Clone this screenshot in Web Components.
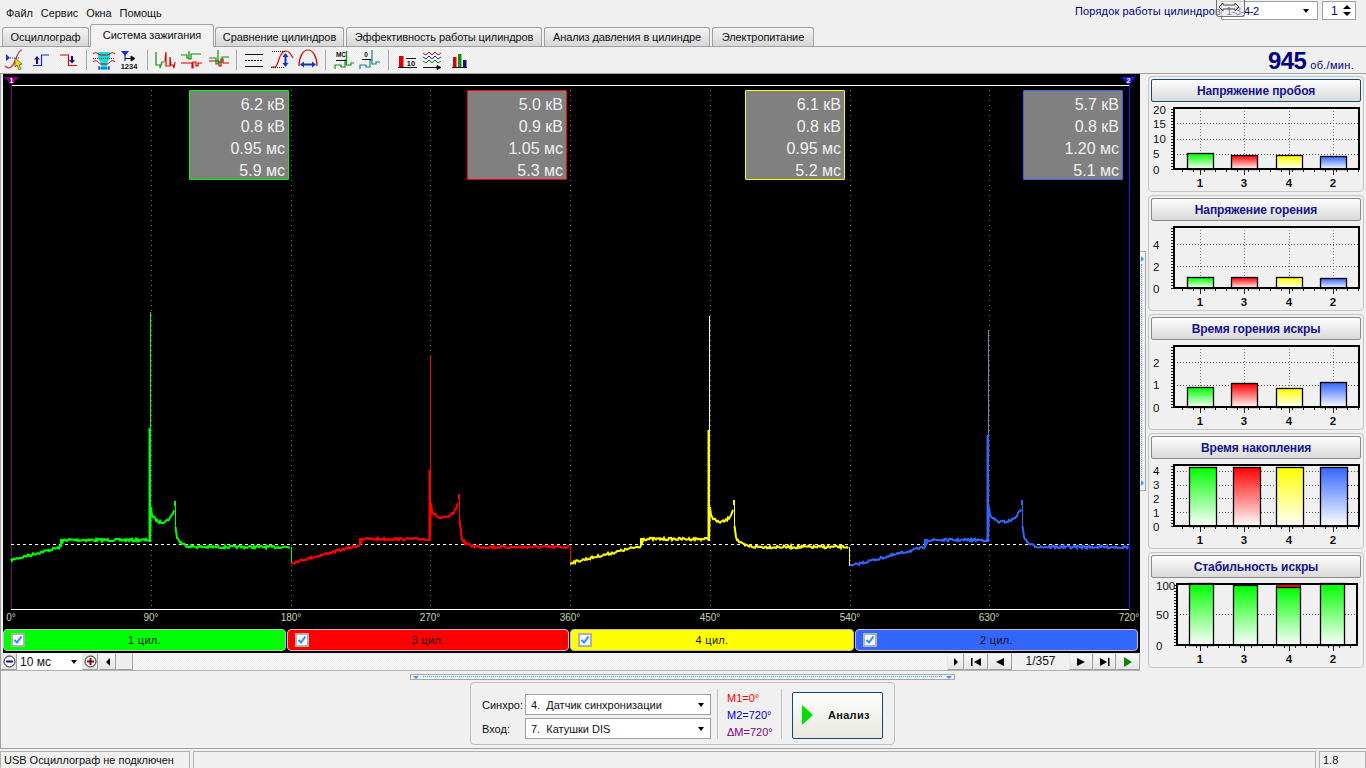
<!DOCTYPE html>
<html lang="ru">
<head>
<meta charset="utf-8">
<title>Система зажигания</title>
<style>
  html, body { margin: 0; padding: 0; }
  body { width: 1366px; height: 768px; overflow: hidden; background: #f0f0f0; font: 11px "Liberation Sans", Arial, sans-serif; color: #111; display: flex; flex-direction: column; }
</style>
</head>
<body>
<top-bar></top-bar>
<tab-strip></tab-strip>
<tool-bar>
  <tool-btn><svg viewBox="0 0 26 26"><path d="M1 19C5 23 9 20 11 14S15 3 18 3" fill="none" stroke="#e02020" stroke-width="1.2"/><path d="M2 7l4 4-4 3z" fill="#1030d0"/><path d="M6 11h9" stroke="#1030d0" stroke-dasharray="1 1"/><path d="M11 11l0 9 2-2 2 5 2-1-2-4 3-1z" fill="#f5d800" stroke="#333" stroke-width=".6"/></svg></tool-btn>
  <tool-btn><svg viewBox="0 0 26 26"><path d="M3 18.5h8.5V8H19" fill="none" stroke="#1030d0" stroke-width="1.2"/><path d="M7 9l3 3.5H8V17H6v-4.5H4z" fill="#101080"/></svg></tool-btn>
  <tool-btn active><svg viewBox="0 0 26 26"><path d="M4 8h8.5v10.5H21" fill="none" stroke="#e00000" stroke-width="1.2"/><path d="M16 16.5l-3-3.5h2V9h2v4h2z" fill="#101080"/></svg></tool-btn>
  <tool-sep w="8"></tool-sep>
  <tool-btn><svg viewBox="0 0 26 26"><path d="M8 5h12v5l-3 7v6h-6v-6l-3-7z" fill="#10e0e0"/><path d="M3 7c3-3 5 0 7 1h8c2-1 4-4 7-1M3 15c3-3 5 0 7 2h8c2-2 4-5 7-2" fill="none" stroke="#e00000"/><path d="M3 11.5h22" stroke="#111" stroke-dasharray="1 1"/><path d="M9 21h10M9 19v4M19 19v4" stroke="#1030d0" stroke-width="1.2"/></svg></tool-btn>
  <tool-btn><svg viewBox="0 0 26 26"><path d="M5 4h8l-4 5z" fill="#1030d0"/><path d="M9 8v6" stroke="#1030d0" stroke-width="1.2"/><path d="M9 11.5h9M15 9l4 2.500-4 2.500z" stroke="#111" fill="#111"/><text x="13" y="22" text-anchor="middle" font-family="Liberation Sans" font-size="7.5" font-weight="700" fill="#111">1234</text></svg></tool-btn>
  <tool-sep w="10"></tool-sep>
  <tool-btn active><svg viewBox="0 0 26 26"><path d="M4 5V18H8V21L10 15H13" fill="none" stroke="#109010" stroke-width="1.2"/><path d="M13 14L14 5V19H18V10L19 18H21L22 21L23 15" fill="none" stroke="#e00000" stroke-width="1.2"/></svg></tool-btn>
  <tool-btn><svg viewBox="0 0 26 26"><path d="M3 8H9V11H11V4V12H13V7H23" fill="none" stroke="#109010" stroke-width="1.2"/><path d="M3 16H14V21H15V15H18V19H20V16H24" fill="none" stroke="#e00000" stroke-width="1.2"/></svg></tool-btn>
  <tool-btn><svg viewBox="0 0 26 26"><path d="M5 14H15V19H17V12H19V16H25" fill="none" stroke="#e00000" stroke-width="1.2"/><path d="M5 11H12V17H14V3V15H18V10H25" fill="none" stroke="#109010" stroke-width="1.2"/></svg></tool-btn>
  <tool-sep w="12"></tool-sep>
  <tool-btn><svg viewBox="0 0 26 26"><path d="M3 7.5h18M3 19.5h18" stroke="#111" stroke-width="1.2"/><path d="M3 13.5h18" stroke="#111" stroke-dasharray="2 1"/></svg></tool-btn>
  <tool-btn><svg viewBox="0 0 26 26"><path d="M3 20C9 21 9 18 11 12S15 4 18 4 22 6 25 11" fill="none" stroke="#e00000" stroke-width="1.2"/><path d="M4 4.5h13M3 20.5h13" stroke="#111" stroke-dasharray="1 1"/><path d="M17.5 6l3 4h-2v6h2l-3 4-3-4h2v-6h-2z" fill="#1030d0"/></svg></tool-btn>
  <tool-btn><svg viewBox="0 0 26 26"><path d="M5 19C5 10 9 3 14 3S23 10 23 19" fill="none" stroke="#e00000" stroke-width="1.2"/><path d="M6 17.5l4-3v2h8v-2l4 3-4 3v-2h-8v2z" fill="#1030d0"/></svg></tool-btn>
  <tool-sep w="11"></tool-sep>
  <tool-btn active><svg viewBox="0 0 26 26"><path d="M4 22V18H10V20H14V13H15.5V4V18H20V16H23" fill="none" stroke="#109010" stroke-width="1.2"/><text x="10" y="10" text-anchor="middle" font-family="Liberation Sans" font-size="6.5" font-weight="700" fill="#111">МС</text><path d="M5 13.5h10" stroke="#111"/></svg></tool-btn>
  <tool-btn active><svg viewBox="0 0 26 26"><path d="M3 22V18H9V20H13V13H15V3V17H19V15H23" fill="none" stroke="#108888" stroke-width="1.2"/><text x="9" y="10" text-anchor="middle" font-family="Liberation Sans" font-size="6.5" font-weight="700" fill="#111">0</text><path d="M5 12.5h9" stroke="#111"/></svg></tool-btn>
  <tool-sep w="10"></tool-sep>
  <tool-btn active><svg viewBox="0 0 26 26"><rect x="6" y="9" width="4.5" height="11" fill="#e00000"/><path d="M5 20.5h19M13 11.5h10" stroke="#111"/><text x="18" y="19" text-anchor="middle" font-family="Liberation Sans" font-size="7.5" font-weight="700" fill="#111">10</text></svg></tool-btn>
  <tool-btn><svg viewBox="0 0 26 26"><path d="M4 6l3 2 3-3 3 3 3-3 3 3 3-2" fill="none" stroke="#e00000"/><path d="M4 10l3 2 3-3 3 3 3-3 3 3 3-2" fill="none" stroke="#1030d0"/><path d="M4 14l3 2 3-3 3 3 3-3 3 3 3-2" fill="none" stroke="#109010"/><path d="M4 20.5h16M18 18.5l4 2-4 2z" stroke="#111" fill="#111"/></svg></tool-btn>
  <tool-btn active><svg viewBox="0 0 26 26"><rect x="8" y="10" width="3.5" height="10" fill="#e00000"/><rect x="13" y="7" width="3.5" height="13" fill="#109010"/><rect x="18" y="13" width="3.5" height="7" fill="#101080"/><path d="M7 20.5h15" stroke="#111"/></svg></tool-btn>
</tool-bar>
<main-area></main-area>
<analysis-bar></analysis-bar>
<status-bar></status-bar>

<script>
const CYL = { green: '#00ff00', red: '#ff0000', yellow: '#ffff00', blue: '#3366ff' };

class TopBar extends HTMLElement {
  constructor() {
    super();
    this.attachShadow({ mode: 'open' }).innerHTML = `
      <style>
        :host { display: flex; height: 24px; align-items: center; position: relative; flex: none; }
        nav { display: flex; gap: 8px; padding-left: 6px; letter-spacing: -.05px; margin-top: 2px; }
        .order { margin-left: auto; display: flex; align-items: center; margin-top: -3px; color: #000080; }
        .order span { letter-spacing: .15px; width: 146px; white-space: nowrap; }
        .box { background: #fff; border: 1px solid #a0a0a0; height: 19px; box-sizing: border-box; display: flex; align-items: center; }
        .sel { width: 97px; padding: 0 8px 0 4px; justify-content: space-between; letter-spacing: -.4px; }
        .spin { width: 34px; margin: 0 10px 0 4px; padding: 0 4px 0 8px; justify-content: space-between; font-size: 12px; }
        .sel i { border: 3.5px solid transparent; border-top: 4px solid #000; border-bottom: 0; }
        .spin b { display: flex; flex-direction: column; gap: 3px; }
        .spin b i { border: 4px solid transparent; border-top: 0; border-bottom: 4px solid #000; }
        .spin b i + i { border-bottom: 0; border-top: 4px solid #000; }
        .grip { position: absolute; left: 1216px; top: 0; width: 29px; height: 17px; box-sizing: border-box; border: 1px solid #707070; border-top: 0; border-radius: 0 0 3px 3px; background: rgba(228,228,228,.55); }
        .grip svg { display: block; margin: 2px 0 0 1px; }
      </style>
      <nav><span>Файл</span><span>Сервис</span><span>Окна</span><span>Помощь</span></nav>
      <div class="order">
        <span>Порядок работы цилиндров</span>
        <div class="box sel">1-3-4-2<i></i></div>
        <div class="box spin">1<b><i></i><i></i></b></div>
      </div>
      <div class="grip"><svg width="24" height="10" viewBox="0 0 24 10"><path d="M1 5l4-4v2h12V1l4 4-4 4V7H5v2z" fill="none" stroke="#444"/></svg></div>`;
  }
}

class TabStrip extends HTMLElement {
  constructor() {
    super();
    const tabs = [['Осциллограф', 87], ['Система зажигания', 124], ['Сравнение цилиндров', 129], ['Эффективность работы цилиндров', 196], ['Анализ давления в цилиндре', 166], ['Электропитание', 102]];
    this.attachShadow({ mode: 'open' }).innerHTML = `
      <style>
        :host { display: flex; height: 22px; padding-left: 2px; align-items: flex-end; gap: 2px; flex: none; position: relative; z-index: 1; }
        div { box-sizing: border-box; height: 19px; border: 1px solid #a0a0a0; border-bottom: 0; border-radius: 3px 3px 0 0; background: linear-gradient(#f4f4f4, #d6d6d6); text-align: center; line-height: 18px; letter-spacing: -.1px; white-space: nowrap; }
        div.on { height: 23px; background: #f2f2f2; margin: 0 -1px -1px -1px; line-height: 20px; padding-bottom: 3px; }
      </style>
      ${tabs.map((t, i) => `<div class="${i == 1 ? 'on' : ''}" style="width:${t[1]}px">${t[0]}</div>`).join('')}`;
  }
}

class ToolBar extends HTMLElement {
  constructor() {
    super();
    this.attachShadow({ mode: 'open' }).innerHTML = `
      <style>
        :host { display: flex; height: 28px; box-sizing: border-box; padding-left: 4px; border-top: 1px solid #a0a0a0; border-bottom: 1px solid #a0a0a0; flex: none; }
        .rpm { margin-left: auto; padding-right: 12px; display: flex; align-items: baseline; gap: 4px; color: #000080; letter-spacing: .3px; padding-top: 1px; }
        .rpm b { font-size: 24px; letter-spacing: -.6px; line-height: 26px; }
      </style>
      <slot></slot>
      <div class="rpm"><b>945</b>об./мин.</div>`;
  }
}

class ToolBtn extends HTMLElement {
  constructor() {
    super();
    this.attachShadow({ mode: 'open' }).innerHTML = `
      <style>
        :host { display: block; width: 26px; height: 26px; overflow: hidden; }
        :host([active]) { background: repeating-conic-gradient(#fbfbfb 0 25%, #e9e9e9 0 50%) 0 0 / 2px 2px; }
        ::slotted(svg) { display: block; width: 26px; height: 26px; }
      </style>
      <slot></slot>`;
  }
}

class ToolSep extends HTMLElement {
  constructor() {
    super();
    this.attachShadow({ mode: 'open' }).innerHTML = `
      <style>
        :host { display: flex; justify-content: center; height: 26px; }
        i { width: 1px; margin-top: 3px; height: 20px; background: #a8a8a8; }
      </style>
      <i></i>`;
    this.style.width = this.getAttribute('w') + 'px';
  }
}

class MainArea extends HTMLElement {
  constructor() {
    super();
    this.attachShadow({ mode: 'open' }).innerHTML = `
      <style>
        :host { display: flex; height: 597px; flex: none; border-left: 1px solid #a0a0a0; position: relative; }
        .left { margin-left: 2px; width: 1137px; display: flex; flex-direction: column; }
        .split { width: 8px; display: flex; align-items: center; }
        .split div { width: 6px; height: 240px; margin-top: -4px; box-sizing: border-box; border: 1px solid #a8a8a8; border-left: 0; position: relative; }
        .split div::before { content: ""; position: absolute; left: 1px; top: 12px; bottom: 12px; border-left: 1px dotted #3399ff; }
        .split i { position: absolute; left: 1px; border: 3px solid transparent; border-left: 3px solid #3399ff; border-right: 0; }
        .side { width: 217px; display: flex; flex-direction: column; gap: 3px; padding-top: 2px; }
      </style>
      <div class="left">
        <scope-view></scope-view>
        <cyl-legend></cyl-legend>
        <scope-controls></scope-controls>
      </div>
      <div class="split"><div><i style="top:4px"></i><i style="bottom:4px"></i></div></div>
      <div class="side">
        <bar-panel title="Напряжение пробоя" focus ticks="20,15,10,5,0" unit="3.05" bars="5.2,4.7,4.7,4.3"></bar-panel>
        <bar-panel title="Напряжение горения" ticks="4,2,0" unit="11" bars="1,1,1,.9"></bar-panel>
        <bar-panel title="Время горения искры" ticks="2,1,0" unit="22.5" bars=".89,1.06,.84,1.11"></bar-panel>
        <bar-panel title="Время накопления" ticks="4,3,2,1,0" unit="13.8" bars="4.3,4.25,4.25,4.3" left="41" wide="27"></bar-panel>
        <bar-panel title="Стабильность искры" ticks="100,50,0" unit=".62" bars="100,97,93,100" caps="1,#000,#f00,1" left="41" wide="24" inset="3"></bar-panel>
      </div>`;
  }
}

class ScopeView extends HTMLElement {
  constructor() {
    super();
    const seen = [
      { c: CYL.green, s: 8, st: 58, y0: 486, y1: 473, fl: 466, sp: 147, top: 238, mid: 354, be: 172, dip: 447, pk: 427, e: 288, tail: 473, thin: CYL.green },
      { c: CYL.red, s: 288, st: 357, y0: 489, y1: 471, fl: 465, sp: 427, top: 281, mid: 396, be: 456, dip: 443, pk: 420, e: 567, tail: 473, thin: CYL.red },
      { c: CYL.yellow, s: 567, st: 638, y0: 489, y1: 472, fl: 465, sp: 706, top: 242, mid: 356, be: 731, dip: 447, pk: 426, e: 846, tail: 473, thin: '#ffffd8' },
      { c: CYL.blue, s: 847, st: 922, y0: 492, y1: 473, fl: 466, sp: 985, top: 256, mid: 361, be: 1019, dip: 447, pk: 426, e: 1126, tail: 473, thin: '#7088b8' }
    ];
    let seed = 7;
    const rnd = () => (seed = (seed * 16807) % 2147483647) / 2147483647;
    const jit = a => (rnd() - .5) * a;
    const grid = [148, 288, 427, 567, 707, 847, 986];
    const labels = ['0°', '90°', '180°', '270°', '360°', '450°', '540°', '630°', '720°'];
    const traces = seen.map((t, n) => {
      const p = [];
      for (let x = t.s; x < t.st; x += 1) p.push([x, t.y0 + (t.y1 - t.y0) * (x - t.s) / (t.st - t.s) + jit(2.5)]);
      for (let x = t.st + 3; x < t.sp; x += 1) p.push([x, t.fl + jit(2.6)]);
      const burn = [[t.sp, t.mid], [t.sp, t.fl + 2], [t.sp + 1, t.dip - 14], [t.sp + 2, t.dip - 6]];
      for (let x = t.sp + 3; x < t.be; x += 1) {
        const k = (x - t.sp - 3) / (t.be - t.sp - 3);
        burn.push([x, t.dip - 4 + 5 * Math.min(k * 4, 1) - (t.dip - t.pk - 5) * Math.pow(k, 5) + jit(2.5)]);
      }
      const tail = [[t.be + .5, t.pk + 26], [t.be + 2, t.pk + 37]];
      for (let x = t.be + 3; x < t.e; x += 1) {
        const k = Math.exp(-(x - t.be - 3) / 5);
        tail.push([x, t.tail - 8 * k + jit(2.8)]);
      }
      const d = a => a.map(q => q[0].toFixed(1) + ',' + q[1].toFixed(1)).join(' ');
      const next = seen[n + 1];
      return `<polyline points="${d(p)}" fill="none" stroke="${t.c}" stroke-width="2"/>
        <path d="M${t.st} ${t.y1}V${t.fl}H${t.st + 3}" fill="none" stroke="${t.c}" stroke-width="2"/>
        <polyline points="${d(burn)}" fill="none" stroke="${t.c}" stroke-width="2"/>
        <path d="M${t.be - .5} ${t.pk + 5}V${t.pk}M${t.be + .5} ${t.pk}V${t.pk + 26}" stroke="${t.c}" stroke-width="1"/>
        <polyline points="${d(tail)}" fill="none" stroke="${t.c}" stroke-width="2"/>
        <path d="M${t.sp - .5} ${t.fl}V${t.mid}" stroke="${t.c}" stroke-width="2"/>
        <path d="M${t.sp + .5} ${t.mid}V${t.top}" stroke="${t.thin}" stroke-width="1"/>
        ${next ? `<path d="M${t.e + .5} ${t.tail}V${next.y0}" stroke="${t.c}"/>` : ''}`;
    }).join('');
    const reads = [
      [186, CYL.green, '6.2 кВ', '0.8 кВ', '0.95 мс', '5.9 мс'],
      [464, CYL.red, '5.0 кВ', '0.9 кВ', '1.05 мс', '5.3 мс'],
      [742, CYL.yellow, '6.1 кВ', '0.8 кВ', '0.95 мс', '5.2 мс'],
      [1020, CYL.blue, '5.7 кВ', '0.8 кВ', '1.20 мс', '5.1 мс']
    ];
    this.attachShadow({ mode: 'open' }).innerHTML = `
      <style>
        :host { display: block; width: 1137px; height: 553px; background: #000; position: relative; flex: none; }
        svg { display: block; }
        .r { position: absolute; top: 16px; width: 100px; height: 90px; box-sizing: border-box; border: 1px solid; border-radius: 1px; background: #808080; color: #eef0f0; text-align: right; font-size: 16px; line-height: 22px; padding: 3px 3px 0 0; }
        text { font-family: "Liberation Sans", Arial, sans-serif; }
      </style>
      <svg width="1137" height="553">
        ${grid.map(x => `<path d="M${x + .5} 11V535" stroke="#707070" stroke-dasharray="1 4"/>`).join('')}
        <path d="M8 11.5H1126M8 535.5H1126" stroke="#fff"/>
        <path d="M8.5 8V535" stroke="#800080"/>
        <path d="M1126.5 8V535" stroke="#1818ff"/>
        <path d="M8 470.5H1126" stroke="#fff" stroke-dasharray="3 3"/>
        ${traces}
        <path d="M1 3h15l-7.5 8z" fill="#800080"/>
        <text x="8.5" y="9" text-anchor="middle" font-size="7" font-weight="700" fill="#fff">1</text>
        <path d="M1118 3h15l-7.5 8z" fill="#1818e8"/>
        <text x="1125.5" y="9" text-anchor="middle" font-size="7" font-weight="700" fill="#fff">2</text>
        ${labels.map((l, i) => `<text x="${[8,148,288,427,567,707,847,986,1126][i]}" y="547" text-anchor="middle" font-size="10" fill="#c4d8b8">${l}</text>`).join('')}
      </svg>
      ${reads.map(r => `<div class="r" style="left:${r[0]}px;border-color:${r[1]}">${r.slice(2).join('<br>')}</div>`).join('')}`;
  }
}

class CylLegend extends HTMLElement {
  constructor() {
    super();
    const items = [[CYL.green, '1 цил.', 283], [CYL.red, '3 цил.', 282], [CYL.yellow, '4 цил.', 284], [CYL.blue, '2 цил.', 283]];
    this.attachShadow({ mode: 'open' }).innerHTML = `
      <style>
        :host { display: flex; height: 26px; box-sizing: border-box; background: #000; gap: 1px; padding-top: 2px; flex: none; }
        div { box-sizing: border-box; height: 22px; border: 1px solid #c0c0c0; border-radius: 4px; display: flex; align-items: center; justify-content: center; position: relative; letter-spacing: .3px; }
        i { position: absolute; left: 7px; top: 3px; width: 14px; height: 14px; box-sizing: border-box; border: 2px solid #b0b0b0; background: #f4f8ff; }
        svg { position: absolute; left: 0; top: 0; }
      </style>
      ${items.map(t => `<div style="width:${t[2]}px;background:${t[0]}"><i><svg width="10" height="10" viewBox="0 0 10 10"><path d="M1.5 5l2.5 2.5L8.5 1.5" fill="none" stroke="#2f8fef" stroke-width="2"/></svg></i>${t[1]}</div>`).join('')}`;
  }
}

class ScopeControls extends HTMLElement {
  constructor() {
    super();
    const tri = (d, f) => `<svg width="14" height="12" viewBox="0 0 14 12"><path d="${d}" fill="${f || '#000'}"/></svg>`;
    this.attachShadow({ mode: 'open' }).innerHTML = `
      <style>
        :host { display: flex; height: 18px; margin-left: -2px; width: 1139px; box-sizing: border-box; border-bottom: 1px solid #b0b0b0; flex: none; align-items: stretch; }
        .b { box-sizing: border-box; width: 24px; background: linear-gradient(#f8f8f8, #e4e4e4); border: 1px solid; border-color: #e8e8e8 #a0a0a0 #a0a0a0 #e8e8e8; display: flex; align-items: center; justify-content: center; flex: none; }
        .z { width: 16px; background: #e8e8e8; padding: 0; }
        .combo { width: 65px; background: #fff; display: flex; align-items: center; justify-content: space-between; padding: 0 5px 0 3px; box-sizing: border-box; font-size: 12px; flex: none; }
        .combo i { border: 3.5px solid transparent; border-top: 4px solid #000; border-bottom: 0; }
        .track { flex: 1; background: repeating-conic-gradient(#fbfbfb 0 25%, #ebebeb 0 50%) 0 0 / 2px 2px; }
        .thumb { width: 17px; background: #eee; }
        .page { width: 57px; text-align: center; line-height: 17px; font-size: 12px; flex: none; }
        .arr { width: 17px; }
        svg { display: block; }
      </style>
      <div class="b z"><svg width="13" height="13" viewBox="0 0 13 13"><circle cx="6.5" cy="6.5" r="5.5" fill="#f4f4f4" stroke="#222"/><path d="M3 6.5h7" stroke="#101080" stroke-width="2"/></svg></div>
      <div class="combo">10 мс<i></i></div>
      <div class="b z"><svg width="13" height="13" viewBox="0 0 13 13"><circle cx="6.5" cy="6.5" r="5.5" fill="#f4f4f4" stroke="#222"/><path d="M3 6.5h7M6.5 3v7" stroke="#900000" stroke-width="2"/></svg></div>
      <div class="b arr" style="margin-left:1px">${tri('M9 2v8L5 6z')}</div>
      <div class="b thumb"></div>
      <div class="track"></div>
      <div class="b arr">${tri('M5 2v8l4-4z')}</div>
      <div class="b">${tri('M2 2h1.5v8H2zM12 2v8L5 6z')}</div>
      <div class="b">${tri('M11 2v8L3 6z')}</div>
      <div class="page">1/357</div>
      <div class="b">${tri('M3 2v8l8-4z')}</div>
      <div class="b" style="width:23px">${tri('M2 2v8l7-4zM10 2h1.5v8H10z')}</div>
      <div class="b">${tri('M3 1v10l8-5z', '#108010')}</div>`;
  }
}

class BarPanel extends HTMLElement {
  constructor() {
    super();
    const ticks = this.getAttribute('ticks').split(',').map(Number);
    const unit = +this.getAttribute('unit');
    const bars = this.getAttribute('bars').split(',').map(Number);
    const caps = (this.getAttribute('caps') || '').split(',');
    const left = +(this.getAttribute('left') || 39);
    const wide = +(this.getAttribute('wide') || 26);
    const inset = +(this.getAttribute('inset') || 0);
    const colors = [CYL.green, CYL.red, CYL.yellow, CYL.blue];
    const xs = [left, left + 44, 128, 172];
    const cx = [52, 96, 141, 185];
    const names = ['1', '3', '4', '2'];
    const L = 26 + inset, R = 211 - Math.round(inset * .7), B = 65, T = 4;
    const id = this.getAttribute('title').length;
    let minor = '';
    for (let x = L + 8; x < R; x += 11) minor += `M${x}.5 ${B}v3`;
    let side = '';
    for (let y = B; y > T; y -= 3) side += `M${L - 3} ${y + .5}h3`;
    const stab = caps.length > 1;
    const g = colors.map((c, i) => {
      const col = stab ? CYL.green : c;
      return `<linearGradient id="g${id}${i}" x1="0" y1="0" x2="0" y2="1"><stop offset="0" stop-color="${col}"/><stop offset="1" stop-color="#fff"/></linearGradient>`;
    }).join('');
    const rects = bars.map((v, i) => {
      const h = Math.round(v * unit);
      let s = `<rect x="${xs[i] + .5}" y="${B - h + .5}" width="${wide}" height="${h}" fill="url(#g${id}${i})" stroke="#000" stroke-width="1.3"/>`;
      if (stab && caps[i] !== '1') s += `<rect x="${xs[i] + .5}" y="${T + .5}" width="${wide}" height="${B - h - T}" fill="${caps[i]}" stroke="#000"/>`;
      return s;
    }).join('');
    this.attachShadow({ mode: 'open' }).innerHTML = `
      <style>
        :host { display: block; width: 216px; height: 116px; box-sizing: border-box; border: 1px solid #c4c4c4; border-radius: 4px; padding: 2px; position: relative; flex: none; }
        .t { box-sizing: border-box; height: 23px; margin-bottom: 1px; border: 1px solid #8a8a8a; border-radius: 2px; background: linear-gradient(#fdfdfd, #d9d9d9); color: #14148c; font-weight: 700; font-size: 12px; text-align: center; line-height: 22px; letter-spacing: -.1px; width: 210px; }
        :host([focus]) .t { border-color: #154a70; }
        svg { position: absolute; left: -1px; top: 27px; }
        text { font-family: "Liberation Sans", Arial, sans-serif; font-size: 11.5px; fill: #111; }
      </style>
      <div class="t">${this.getAttribute('title')}</div>
      <svg width="216" height="88" viewBox="0 0 216 88">
        <defs>${g}</defs>
        ${ticks.filter(v => v).map(v => `<path d="M${L} ${(B - v * unit).toFixed(0)}.5H${R}" stroke="#555" stroke-dasharray="1 2"/>`).join('')}
        ${cx.map(x => `<path d="M${x}.5 ${T}V${B}" stroke="#777" stroke-dasharray="1 2"/>`).join('')}
        ${rects}
        <path d="${side}${minor}" stroke="#222"/>
        ${cx.map(x => `<path d="M${x}.5 ${B}v6" stroke="#222"/>`).join('')}
        <rect x="${L}" y="${T}" width="${R - L}" height="${B - T}" fill="none" stroke="#000" stroke-width="2"/>
        ${ticks.map(v => `<text x="${L - 21}" y="${Math.max(B - v * unit, T + 1) + 4.5}">${v}</text>`).join('')}
        ${cx.map((x, i) => `<text x="${x}" y="83" text-anchor="middle" style="font-weight:700">${names[i]}</text>`).join('')}
      </svg>`;
  }
}

class AnalysisBar extends HTMLElement {
  constructor() {
    super();
    this.attachShadow({ mode: 'open' }).innerHTML = `
      <style>
        :host { display: block; height: 78px; flex: none; border-left: 1px solid #a0a0a0; border-bottom: 1px solid #a0a0a0; box-sizing: border-box; }
        .split { width: 545px; height: 6px; margin: 3px 0 0 409px; box-sizing: border-box; border: 1px solid #a8a8a8; position: relative; }
        .split::before { content: ""; position: absolute; left: 12px; right: 12px; top: 1px; border-top: 1px dotted #3399ff; }
        .split i { position: absolute; top: 1px; border: 3px solid transparent; border-top: 3px solid #3399ff; border-bottom: 0; }
        .group { box-sizing: border-box; width: 425px; height: 63px; margin: 2px 0 0 469px; border: 1px solid #c0c0c0; border-radius: 4px; display: flex; align-items: center; padding-left: 11px; }
        .labels { display: grid; grid-template-columns: 43px 186px; row-gap: 3px; align-items: center; margin-top: 6px; }
        .sel { box-sizing: border-box; height: 21px; background: #fff; border: 1px solid #a0a0a0; display: flex; justify-content: space-between; align-items: center; padding: 0 6px 0 5px; }
        .sel i { border: 3.5px solid transparent; border-top: 4px solid #000; border-bottom: 0; }
        .sep { width: 1px; height: 50px; background: #c0c0c0; margin-top: 1px; }
        .m { width: 63px; padding-left: 9px; box-sizing: border-box; line-height: 17px; margin-top: 3px; }
        .go { margin: 3px 0 0 10px; box-sizing: border-box; width: 91px; height: 47px; border: 1px solid #15486e; border-radius: 2px; background: linear-gradient(#fdfdfd, #e8e8e0); display: flex; align-items: center; font-weight: 700; letter-spacing: .3px; }
        .go svg { margin: 0 15px 0 9px; }
      </style>
      <div class="split"><i style="left:2px"></i><i style="right:2px"></i></div>
      <div class="group">
        <div class="labels">
          <span>Синхро:</span><div class="sel">4.&nbsp; Датчик синхронизации<i></i></div>
          <span>Вход:</span><div class="sel">7.&nbsp; Катушки DIS<i></i></div>
        </div>
        <div class="sep" style="margin-left:6px"></div>
        <div class="m"><div style="color:#f00000">M1=0°</div><div style="color:#0000e8">M2=720°</div><div style="color:#800080">ΔM=720°</div></div>
        <div class="sep"></div>
        <div class="go"><svg width="11" height="20" viewBox="0 0 11 20"><path d="M0 0l11 10L0 20z" fill="#00e000"/></svg>Анализ</div>
      </div>`;
  }
}

class StatusBar extends HTMLElement {
  constructor() {
    super();
    this.attachShadow({ mode: 'open' }).innerHTML = `
      <style>
        :host { display: flex; flex: 1; gap: 3px; padding-top: 2px; }
        div { border: 1px solid #b0b0b0; border-width: 1px 1px 0 1px; box-sizing: border-box; padding: 2px 3px; letter-spacing: -.02px; }
      </style>
      <div style="width:190px">USB Осциллограф не подключен</div>
      <div style="flex:1"></div>
      <div style="width:47px">1.8</div>`;
  }
}

customElements.define('top-bar', TopBar);
customElements.define('tab-strip', TabStrip);
customElements.define('tool-bar', ToolBar);
customElements.define('tool-btn', ToolBtn);
customElements.define('tool-sep', ToolSep);
customElements.define('scope-view', ScopeView);
customElements.define('cyl-legend', CylLegend);
customElements.define('scope-controls', ScopeControls);
customElements.define('bar-panel', BarPanel);
customElements.define('main-area', MainArea);
customElements.define('analysis-bar', AnalysisBar);
customElements.define('status-bar', StatusBar);
</script>
</body>
</html>
